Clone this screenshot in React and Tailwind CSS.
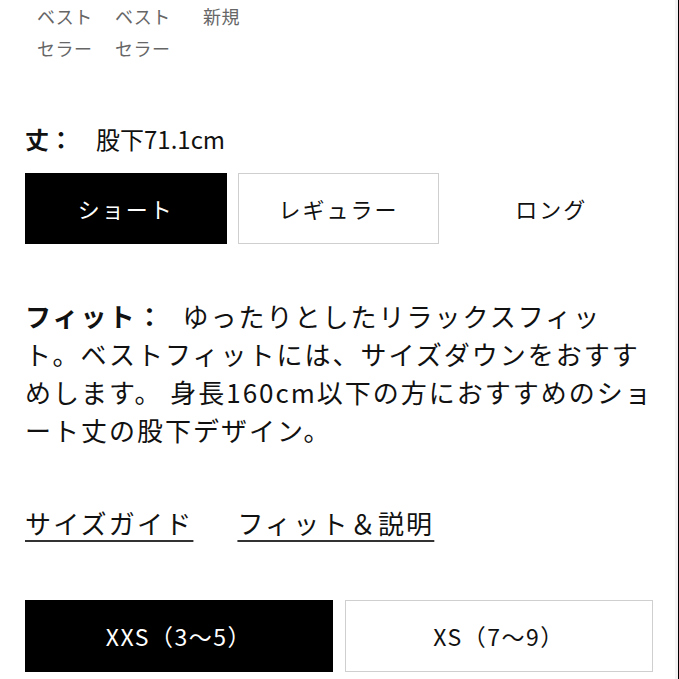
import React from "react";

const jp = { fontFamily: '"Noto Sans CJK JP", "Noto Sans", sans-serif' };

export default function App() {
  return (
    <div className="w-[679px] h-[679px] bg-white overflow-hidden relative text-[#111]" style={jp}>
      <div className="absolute right-0 top-0 h-full w-[4px] bg-[#f3f3f3] border-r border-black" />
      <div className="pl-[37px] pt-0 flex gap-[22px] text-[18px] leading-[32px] text-[#666] tracking-[0.5px]">
        <div className="w-[56px]">ベスト<br />セラー</div>
        <div className="w-[66px]">ベスト<br />セラー</div>
        <div>新規</div>
      </div>

      <div className="px-[25px] w-[653px] box-content">
        <div className="mt-[60px] flex items-center h-[30px] text-[24px]">
          <span className="font-bold">丈：</span>
          <span className="ml-[23px]">股下71.1cm</span>
        </div>

        <div className="mt-[19px] grid grid-cols-3 gap-[11px] w-[627px]">
          <div className="h-[71px] bg-black text-white flex items-center justify-center text-[22px] tracking-[2px]">ショート</div>
          <div className="h-[71px] border border-[#cfcfcf] flex items-center justify-center text-[22px] tracking-[2px]">レギュラー</div>
          <div className="h-[71px] flex items-center justify-center text-[22px] tracking-[2px]">ロング</div>
        </div>

        <div className="mt-[53px] text-[26px] leading-[38px] tracking-[2px] whitespace-nowrap">
          <div><span className="font-bold">フィット：</span><span className="ml-[18px]">ゆったりとしたリラックスフィッ</span></div>
          <div>ト。ベストフィットには、サイズダウンをおすす</div>
          <div>めします。 身長160cm以下の方におすすめのショ</div>
          <div>ート丈の股下デザイン。</div>
        </div>

        <div className="mt-[56px] flex gap-[44px] text-[26px] leading-[36px] tracking-[2.2px]">
          <span className="underline decoration-[2px] underline-offset-[6px] decoration-[#333]">サイズガイド</span>
          <span className="underline decoration-[2px] underline-offset-[6px] decoration-[#333]">フィット＆説明</span>
        </div>

        <div className="mt-[59px] grid grid-cols-2 gap-[12px] w-[628px]">
          <div className="h-[72px] bg-black text-white flex items-center justify-center text-[23px] tracking-[1.5px]">XXS（3〜5）</div>
          <div className="h-[72px] border border-[#cfcfcf] flex items-center justify-center text-[23px] tracking-[1.5px]">XS（7〜9）</div>
        </div>
      </div>
    </div>
  );
}
